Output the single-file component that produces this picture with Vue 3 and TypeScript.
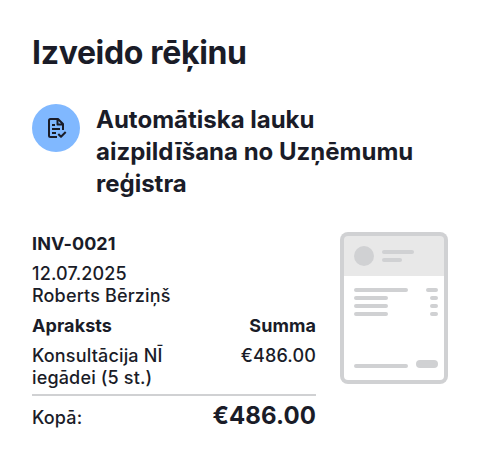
<script setup lang="ts">
interface Line { label: string; sum: string }
const item: Line = { label: 'Konsultācija NĪ iegādei (5 st.)', sum: '€486.00' }
</script>

<template>
  <main class="card">
    <h1>Izveido rēķinu</h1>
    <section class="feature">
      <div class="badge">
        <svg width="24" height="24" viewBox="0 0 24 24" fill="none" stroke="#1a1c28" stroke-width="2" stroke-linecap="butt" stroke-linejoin="round">
          <path d="M19 14V8l-5-5H6.500Q5 3 5 4.500v15Q5 21 6.500 21H13M13.500 3v5.500H19M8 9h3M8 13h8M8 17h4" />
          <path d="M14.300 18l2.700 2.700 4.700-4.700" />
        </svg>
      </div>
      <h2>Automātiska lauku aizpildīšana no Uzņēmumu reģistra</h2>
    </section>
    <section class="invoice">
      <div class="details">
        <strong>INV-0021</strong>
        <p class="meta">12.07.2025<br />Roberts Bērziņš</p>
        <div class="row head"><strong>Apraksts</strong><strong>Summa</strong></div>
        <div class="row item"><span class="desc">{{ item.label }}</span><span class="sum">{{ item.sum }}</span></div>
        <div class="row total"><span>Kopā:</span><b>{{ item.sum }}</b></div>
      </div>
      <svg class="doc" width="108" height="152" viewBox="0 0 108 152">
        <rect width="108" height="152" rx="8" fill="#d0d1d3" />
        <path d="M4 44h100v100a4 4 0 0 1-4 4H8a4 4 0 0 1-4-4z" fill="#fff" />
        <path d="M8 4h92a4 4 0 0 1 4 4v36H4V8a4 4 0 0 1 4-4z" fill="#e8e8e8" />
        <circle cx="24" cy="24" r="10" fill="#d0d1d3" />
        <path d="M44 20h28M44 28h16M16 58h50M88 58h8M16 66h30M92 66h4M16 74h30M92 74h4M16 82h30M92 82h4M16 134h50" stroke="#d0d1d3" stroke-width="4" stroke-linecap="round" />
        <rect x="76" y="128" width="22" height="8" rx="4" fill="#d0d1d3" />
      </svg>
    </section>
  </main>
</template>

<style>
body { background: #fff; }
</style>
<style scoped>
.card { box-sizing: border-box; width: 480px; height: 464px; padding: 33px 32px 32px; font-family: Inter, sans-serif; color: #1a1c28; background: #fff; }
h1 { margin: 0; font-size: 32px; line-height: 40px; font-weight: 700; letter-spacing: -0.34px; }
.feature { display: flex; gap: 16px; margin-top: 31px; }
.badge { flex: none; display: flex; align-items: center; justify-content: center; width: 48px; height: 48px; border-radius: 50%; background: #80b8ff; }
h2 { margin: 0; width: 340px; font-size: 24px; line-height: 32px; font-weight: 700; }
.invoice { display: flex; gap: 24px; margin-top: 32px; font-size: 18px; line-height: 22px; font-weight: 500; letter-spacing: 0.16px; }
.details { width: 284px; padding-top: 1px; }
strong { font-weight: 700; letter-spacing: 0.08px; }
.details > strong { display: block; }
.meta { margin: 8px 0; }
.row { display: flex; justify-content: space-between; }
.item { margin-top: 8px; padding-bottom: 5px; border-bottom: 2px solid #d0d1d3; }
.desc { width: 150px; }
.total { align-items: center; margin-top: 4px; }
.total span { padding-top: 4px; }
.total b { font-size: 24px; line-height: 32px; letter-spacing: 0.1px; }
.doc { flex: none; }
</style>
